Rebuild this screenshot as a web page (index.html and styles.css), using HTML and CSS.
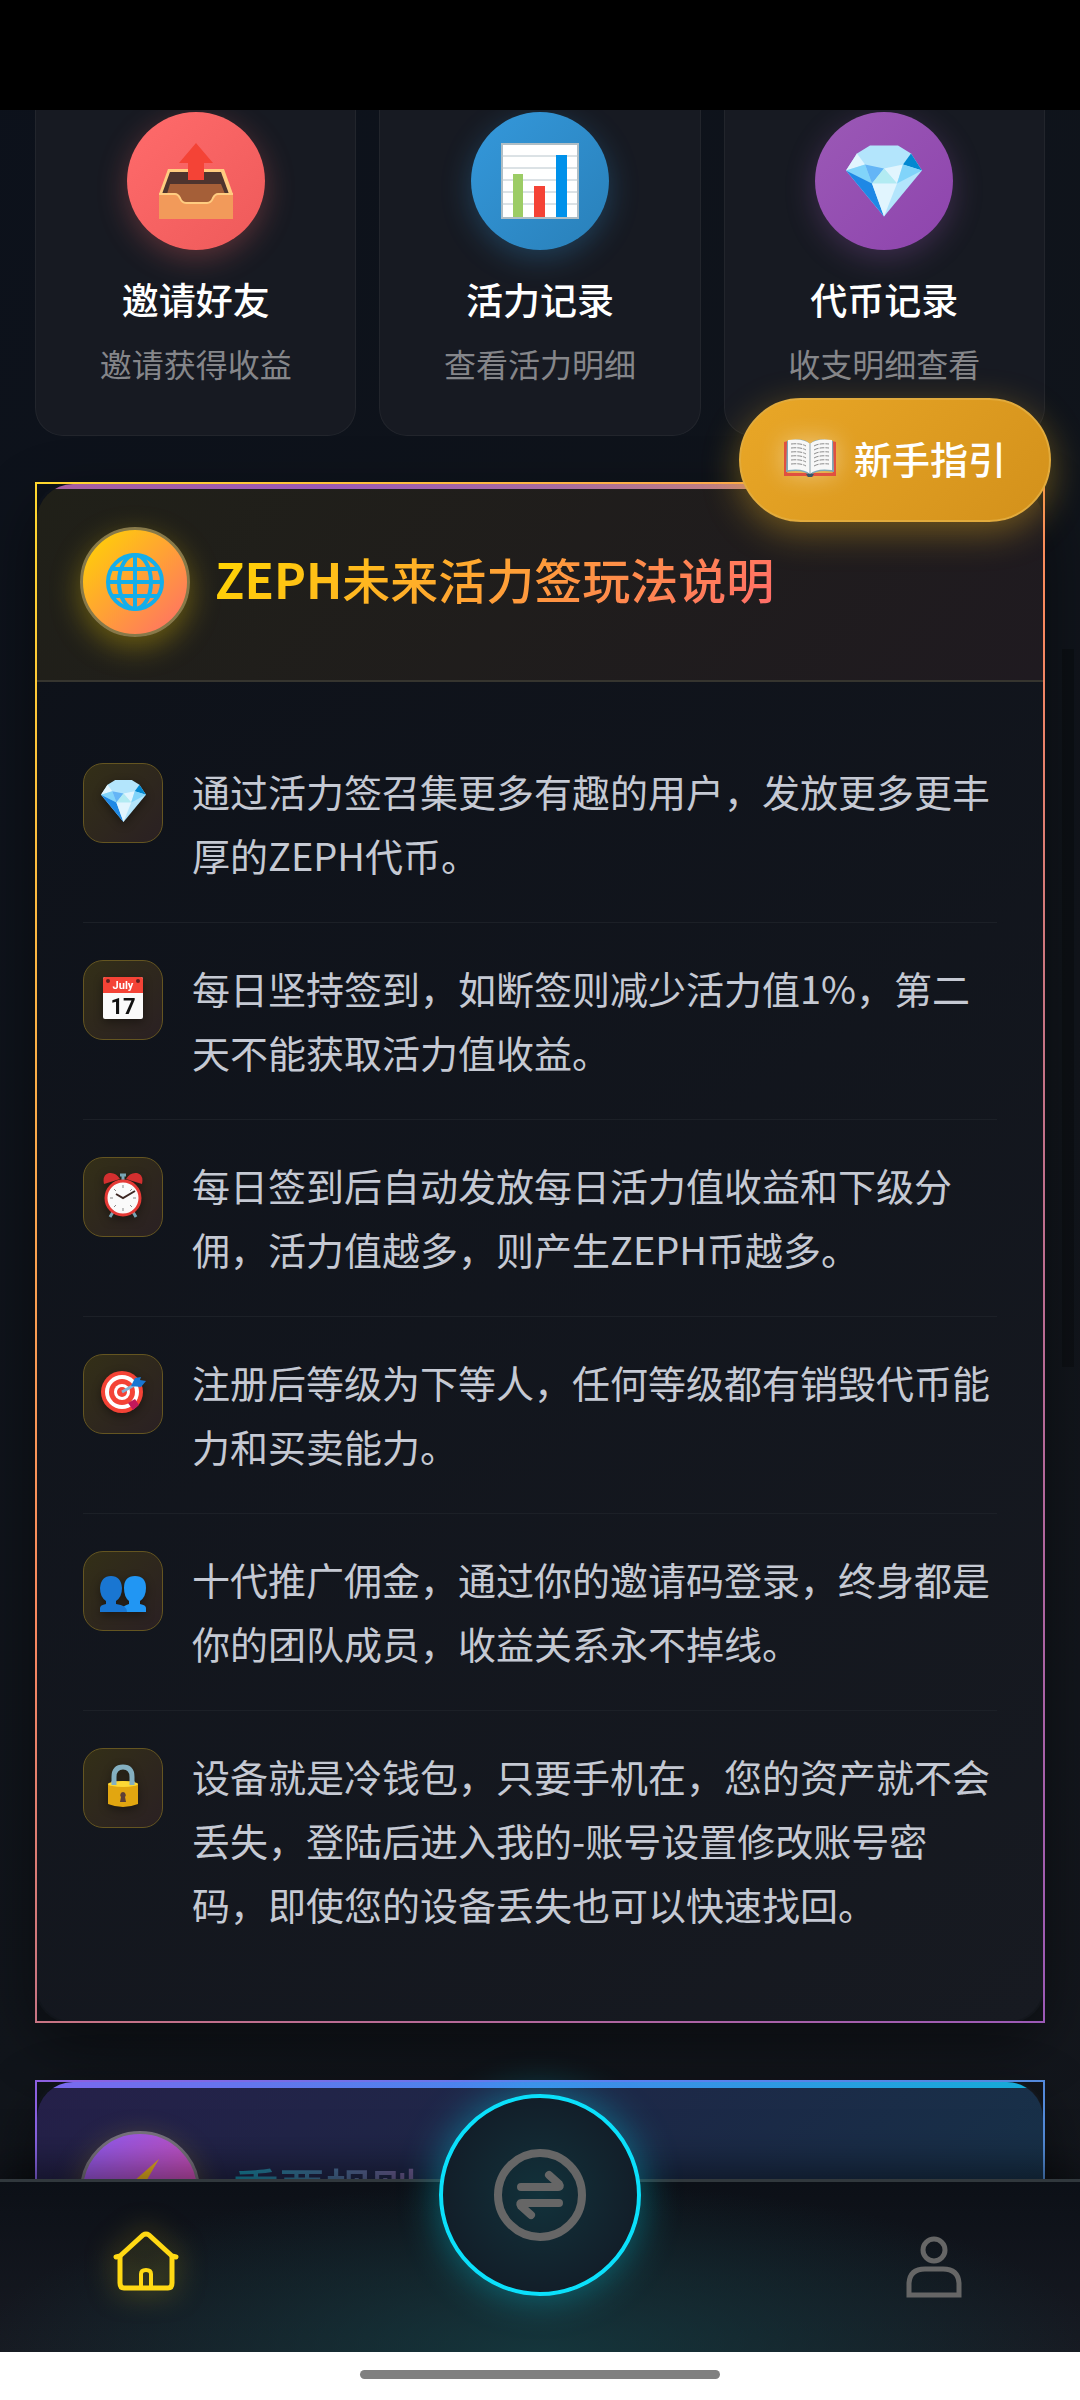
FILE: index.html
```html
<!DOCTYPE html>
<html lang="zh-CN">
<head>
    <meta charset="UTF-8">
    <meta name="viewport" content="width=device-width, initial-scale=1.0">
    <title>ZEPH</title>
    <link rel="stylesheet" href="styles.css">
</head>
<body>

<!-- shared drawings -->
<svg class="defs" aria-hidden="true">
    <symbol id="gem" viewBox="0 0 76 71">
        <path d="M24 0h28l13 8 11 17-38 46L0 25 11 8z" fill="#b3e5fc"/>
        <path d="M11 8l8 11L0 25z" fill="#e1f5fe"/>
        <path d="M65 8l11 17-19-6z" fill="#0288d1"/>
        <path d="M0 25l19-6 7 19z" fill="#81d4fa"/>
        <path d="M19 19l19 4-12 15z" fill="#64b5f6"/>
        <path d="M57 19l-19 4 13 15z" fill="#e1f5fe"/>
        <path d="M57 19l19 6-25 13z" fill="#81d4fa"/>
        <path d="M38 23l13 15H26z" fill="#b2ebf2"/>
        <path d="M0 25l26 13 12 33z" fill="#1e88e5"/>
        <path d="M26 38h25L38 71z" fill="#e1f5fe"/>
    </symbol>
</svg>

<div class="status-bar"></div>

<main class="page">
    <nav class="quick">
        <a class="quick-card" href="#invite">
            <span class="quick-icon red">
                <svg width="76" height="76" viewBox="0 0 76 76">
                    <path d="M10 26h56l9 25v25H1V51z" fill="#ffcc80"/>
                    <path d="M12 29h51l8 22H4z" fill="#4e342e"/>
                    <path d="M12 41h51l4 10-10 8H19L9 51z" fill="#a55f38"/>
                    <path d="M1 51h16q3 0 5 4 2 5 6 5h21q4 0 6-5 2-4 5-4h15v25H1z" fill="#f29a5a"/>
                    <path d="M1 51h16q3 0 5 4 2 5 6 5h21q4 0 6-5 2-4 5-4h15" fill="none" stroke="#ffcc80" stroke-width="2"/>
                    <path d="M38 0l17 20h-9v17H30V20h-9z" fill="#f44336"/>
                </svg>
            </span>
            <span class="quick-title">邀请好友</span>
            <span class="quick-desc">邀请获得收益</span>
        </a>
        <a class="quick-card" href="#vitality">
            <span class="quick-icon blue">
                <svg width="78" height="76" viewBox="0 0 78 76">
                    <path d="M1 1h76v74H1z" fill="#fff" stroke="#b0bec5" stroke-width="2"/>
                    <path d="M1 13h76M1 25h76M1 37h76M1 49h76M1 61h76" stroke="#b8c5cc"/>
                    <path d="M12 31h10v43H12z" fill="#9ccc65"/>
                    <path d="M33 43h11v31H33z" fill="#f44336"/>
                    <path d="M55 12h11v62H55z" fill="#0091ea"/>
                </svg>
            </span>
            <span class="quick-title">活力记录</span>
            <span class="quick-desc">查看活力明细</span>
        </a>
        <a class="quick-card" href="#token">
            <span class="quick-icon purple">
                <svg width="76" height="74"><use href="#gem"/></svg>
            </span>
            <span class="quick-title">代币记录</span>
            <span class="quick-desc">收支明细查看</span>
        </a>
    </nav>

    <section class="panel">
        <header class="panel-head">
            <span class="panel-icon">
                <svg width="58" height="58" viewBox="0 0 58 58" fill="none" stroke="#14aeea" stroke-width="4">
                    <circle cx="29" cy="29" r="27"/>
                    <ellipse cx="29" cy="29" rx="16" ry="27"/>
                    <path d="M29 2v54M2 29h54M7 16h44M7 43h44"/>
                </svg>
            </span>
            <h2><strong>ZEPH</strong>未来活力签玩法说明</h2>
        </header>
        <ul class="rules">
            <li>
                <span class="rule-icon"><svg width="45" height="42"><use href="#gem"/></svg></span>
                <p>通过活力签召集更多有趣的用户，发放更多更丰厚的ZEPH代币。</p>
            </li>
            <li>
                <span class="rule-icon">
                    <svg width="42" height="44" viewBox="0 0 42 44">
                        <rect x="1" y="1" width="40" height="42" rx="2" fill="#fafafa"/>
                        <path d="M1 17V3q0-2 2-2h36q2 0 2 2v14z" fill="#f44336"/>
                        <circle cx="6" cy="5" r="2" fill="#5d2020"/>
                        <circle cx="36" cy="5" r="2" fill="#5d2020"/>
                        <text x="21" y="13" class="cal-month">July</text>
                        <text x="21" y="38" class="cal-day">17</text>
                    </svg>
                </span>
                <p>每日坚持签到，如断签则减少活力值1%，第二天不能获取活力值收益。</p>
            </li>
            <li>
                <span class="rule-icon">
                    <svg width="40" height="46" viewBox="0 0 40 46">
                        <path d="M10 40l-3 5M30 40l3 5M20 2v8M17 3h6" stroke="#78a5b5" stroke-width="3"/>
                        <path d="M1 12Q-1 3 6 1q7-1 11 6zM39 12q2-9-5-11-7-1-11 6z" fill="#d32f2f"/>
                        <circle cx="20" cy="26" r="17" fill="#fafafa" stroke="#e53935" stroke-width="3"/>
                        <path d="M20 13v3M20 36v3M7 26h3M30 26h3M11 17l2 2M29 17l-2 2M11 35l2-2M29 35l-2-2" stroke="#888"/>
                        <path d="M13 22l7 4 12-7" fill="none" stroke="#3e2723" stroke-width="2"/>
                    </svg>
                </span>
                <p>每日签到后自动发放每日活力值收益和下级分佣，活力值越多，则产生ZEPH币越多。</p>
            </li>
            <li>
                <span class="rule-icon">
                    <svg width="46" height="44" viewBox="0 0 46 44">
                        <circle cx="22" cy="22" r="21" fill="#f44336"/>
                        <circle cx="22" cy="22" r="17" fill="#fff"/>
                        <circle cx="22" cy="22" r="13" fill="#f44336"/>
                        <circle cx="22" cy="22" r="8" fill="#fff"/>
                        <circle cx="22" cy="22" r="5" fill="#f44336"/>
                        <path d="M28 33l7-4 4 6-6 5z" fill="#c2185b"/>
                        <path d="M22 22l14-8" stroke="#81b4d8" stroke-width="3"/>
                        <path d="M31 16l4-8 6-1-1 3 6 1-5 6z" fill="#1976d2"/>
                    </svg>
                </span>
                <p>注册后等级为下等人，任何等级都有销毁代币能力和买卖能力。</p>
            </li>
            <li>
                <span class="rule-icon people">
                    <svg width="46" height="38" viewBox="0 0 46 38">
                        <path d="M23 37v-4q0-2 6-4v-3q-5-4-5-13Q24 1 35 1t11 12q0 9-6 13v3q6 1 6 4v4z" fill="#2196f3"/>
                        <path d="M0 37v-4q0-3 6-4v-3Q0 22 0 13 1 1 11 1t11 12q0 9-6 13v3q11 1 11 8z" fill="#1976d2"/>
                    </svg>
                </span>
                <p>十代推广佣金，通过你的邀请码登录，终身都是你的团队成员，收益关系永不掉线。</p>
            </li>
            <li>
                <span class="rule-icon">
                    <svg width="32" height="44" viewBox="0 0 32 44">
                        <path d="M7 22V13q0-10 9-10t9 10v9" fill="none" stroke="#84b0c1" stroke-width="5"/>
                        <path d="M1 20q15-6 30 0v20q-15 6-30 0z" fill="#e2a610"/>
                        <ellipse cx="16" cy="20" rx="15" ry="3" fill="#fdd835"/>
                        <path d="M7 17v4M25 17v4" stroke="#84b0c1" stroke-width="5"/>
                        <path d="M16 28a3 3 0 0 1 2 5l1 5h-6l1-5a3 3 0 0 1 2-5z" fill="#5d4037"/>
                    </svg>
                </span>
                <p>设备就是冷钱包，只要手机在，您的资产就不会丢失，登陆后进入我的-账号设置修改账号密码，即使您的设备丢失也可以快速找回。</p>
            </li>
        </ul>
    </section>

    <section class="panel important">
        <header class="panel-head">
            <span class="panel-icon">
                <svg width="64" height="64" viewBox="0 0 64 64">
                    <path d="M51 0L8 38h20L12 64l44-38H36z" fill="#e8b020"/>
                </svg>
            </span>
            <h2>重要规则</h2>
        </header>
    </section>
</main>

<div class="scroll-thumb"></div>

<button type="button" class="guide">
    <svg class="book" width="52" height="38" viewBox="0 0 52 38">
        <path d="M0 3l4-1v30l-1 2h46l-1-2V2l4 1v34H30q-4 2-8 0H0z" fill="#e05040"/>
        <path d="M3 2Q20-2 26 5q6-7 23-3l1 31q-18-3-24 4-6-7-24-4z" fill="#7fa9b8"/>
        <path d="M4 1q16-2 22 4 6-6 22-4v30q-16-2-22 4-6-6-22-4z" fill="#f7f7f7"/>
        <path d="M26 5v31" stroke="#c5ced2" stroke-width="2"/>
        <path d="M7 5q10-1 15 2M7 9q10-1 15 2M7 13q10-1 15 2M7 17q10-1 15 2M7 21q10-1 15 2M7 25q10-1 15 2M30 7q5-3 15-2M30 11q5-3 15-2M30 15q5-3 15-2M30 19q5-3 15-2M30 23q5-3 15-2M30 27q5-3 15-2" fill="none" stroke="#8d8d8d" stroke-dasharray="5 1"/>
        <path d="M22 35q4-1 4 0 0-1 4 0l-2 3h-4z" fill="#37596a"/>
    </svg>
    新手指引
</button>

<nav class="tabbar">
    <a class="tab active" href="#home" aria-label="首页">
        <svg width="66" height="60" viewBox="0 0 66 60" fill="none" stroke="#ffd914" stroke-width="5" stroke-linecap="round" stroke-linejoin="round">
            <path d="M3 26l4-1L30 4q3-2 6 0l23 21 4 1"/>
            <path d="M7 26v26q0 5 4 5h44q4 0 4-5V26"/>
            <path d="M28 57V43q0-4 5-4t5 4v14" stroke-width="4"/>
        </svg>
    </a>
    <a class="tab-center" href="#trade" aria-label="交易">
        <svg width="92" height="92" viewBox="0 0 92 92" fill="none" stroke="#666" stroke-width="8" stroke-linecap="round" stroke-linejoin="round">
            <circle cx="46" cy="46" r="42"/>
            <path d="M27 38h37q3 0 1-3l-10-9"/>
            <path d="M65 54H28q-3 0-1 3l10 9"/>
        </svg>
    </a>
    <a class="tab" href="#me" aria-label="我的">
        <svg width="56" height="64" viewBox="0 0 56 64" fill="none" stroke="#666" stroke-width="5">
            <circle cx="28" cy="15" r="11"/>
            <path d="M3 60V48q1-14 16-14h18q15 0 16 14v12z"/>
        </svg>
    </a>
</nav>

<div class="gesture-bar"><span></span></div>

</body>
</html>
```
FILE: styles.css
```css
* { box-sizing: border-box; }
body {
    margin: 0; height: 100vh; display: flex; flex-direction: column; position: relative;
    font-family: "Noto Sans CJK SC", sans-serif; color: #fff;
    background: linear-gradient(135deg, #0c111b, #11151b 60%, #14171d);
}
a { color: inherit; text-decoration: none; }
svg { display: block; }
.defs { position: absolute; width: 0; height: 0; }

.status-bar { flex: none; height: 110px; background: #000; }
.page { flex: 1; min-height: 0; overflow-y: auto; scrollbar-width: none; padding: 0 35px; }

/* quick entries */
.quick { display: grid; grid-template-columns: repeat(3, 1fr); gap: 23px; }
.quick-card {
    display: flex; flex-direction: column; align-items: center; padding: 2px 0 52px;
    background: #171a22; border: 1px solid #22252c; border-top: none; border-radius: 0 0 28px 28px;
}
.quick-icon {
    width: 138px; height: 138px; border-radius: 50%; margin-bottom: 24px;
    display: flex; align-items: center; justify-content: center;
}
.red { background: linear-gradient(135deg, #ff6b6b, #ee5a5a); box-shadow: 0 8px 30px rgba(255, 107, 107, .3); }
.blue { background: linear-gradient(135deg, #3498db, #2980b9); box-shadow: 0 8px 30px rgba(52, 152, 219, .3); }
.purple { background: linear-gradient(135deg, #9b59b6, #8e44ad); box-shadow: 0 8px 30px rgba(155, 89, 182, .3); }
.quick-title { font-size: 37px; line-height: 50px; font-weight: 500; margin-bottom: 19px; }
.quick-desc { font-size: 32px; line-height: 40px; color: #85868a; }

/* rule panels */
.panel {
    margin: 46px 0 57px; border: 2px solid;
    border-image: linear-gradient(135deg, #ffd72e, #f9885f 45%, #c87482 60%, #9b59b6) 1;
    border-radius: 36px; background: linear-gradient(145deg, #0d1119, #171a21) padding-box;
    box-shadow: 0 20px 60px rgba(0, 0, 0, .45);
}
.panel-head {
    display: flex; align-items: center; gap: 25px; padding: 38px 43px 43px;
    border-top: 5px solid transparent; border-bottom: 2px solid #36352f; border-radius: 36px 36px 0 0;
    background: linear-gradient(90deg, #a8609f, #9b59b6 28%, #a86ca0 52%, #d28d6c 80%, #ff9060) border-box top / 100% 5px no-repeat,
        linear-gradient(135deg, #202018, #1f1a20) border-box;
}
.panel-icon {
    flex: none; width: 110px; height: 110px; border-radius: 50%; border: 3px solid #877949;
    display: flex; align-items: center; justify-content: center;
    background: linear-gradient(135deg, #ffd700, #ff6b6b); box-shadow: 0 10px 30px rgba(255, 215, 0, .35);
}
.panel h2 {
    margin: 0; padding-bottom: 8px; font-size: 48px; line-height: 64px; font-weight: 500;
    background: linear-gradient(135deg, #ffd700, #ff6b6b); -webkit-background-clip: text; background-clip: text;
    color: transparent;
}
.rules { list-style: none; margin: 0; padding: 44px 46px 50px; }
.rules li { display: flex; align-items: flex-start; gap: 29px; padding: 33px 0 35px; border-bottom: 1px solid #1c2027; }
.rules li:last-child { border-bottom: none; }
.rules p { flex: 1; margin: 0; font-size: 38px; line-height: 64px; color: #c5c9d3; }
.rule-icon {
    flex: none; width: 80px; height: 80px; margin-top: 4px; border-radius: 20px; border: 1px solid #645521;
    display: flex; align-items: center; justify-content: center; padding-bottom: 4px;
    background: linear-gradient(135deg, #332f17, #2a2023);
}
.rule-icon svg { filter: drop-shadow(0 3px 5px rgba(0, 0, 0, .4)); }
.people { padding: 6px 0 0; }
.cal-month { font: bold 11px Roboto, sans-serif; fill: #fff; text-anchor: middle; }
.cal-day { font: bold 22px Roboto, sans-serif; fill: #111; text-anchor: middle; }

.important { border-image: linear-gradient(135deg, #8d5fe0, #5b7ff0 50%, #4f8fd0) 1; }
.important .panel-head {
    gap: 33px; padding-top: 43px; border-top-width: 6px;
    background: linear-gradient(90deg, #7b68ee, #4a85ec 45%, #14acd8) border-box top / 100% 6px no-repeat,
        linear-gradient(135deg, #252049, #1d2847 50%, #163349) border-box;
}
.important .panel-icon {
    width: 120px; height: 120px; border-color: #77727c;
    background: linear-gradient(135deg, #8b5cf6, #ec4899); box-shadow: 0 8px 30px rgba(255, 215, 0, .25);
}
.important h2 { font-size: 46px; background-image: linear-gradient(90deg, #168aa5, #755a92); }

.scroll-thumb { position: absolute; right: 6px; top: 649px; width: 12px; height: 718px; background: rgba(0, 0, 0, .22); }

/* floating guide button */
.guide {
    position: absolute; top: 398px; right: 29px; height: 124px; padding: 0 43px 5px; border-radius: 62px;
    display: flex; align-items: center; gap: 18px;
    border: 2px solid #e2ab3c; background: linear-gradient(135deg, #e9a727, #d3911b);
    color: #fff; font: 500 38px "Noto Sans CJK SC", sans-serif; cursor: pointer;
    box-shadow: 0 10px 36px rgba(240, 180, 30, .4);
}
.book { filter: drop-shadow(0 0 12px rgba(255, 255, 255, .4)); }

/* bottom bar */
.tabbar {
    flex: none; height: 173px; display: flex; justify-content: space-between; align-items: center; position: relative;
    border-top: 3px solid #31383d;
    background: radial-gradient(ellipse 52% 100% at 50% 100%, rgba(20, 60, 66, .8), transparent),
        linear-gradient(#0c1017, #171a22);
    box-shadow: 0 -10px 40px rgba(0, 0, 0, .5);
}
.tab { width: 27%; display: flex; justify-content: center; }
.active { padding-bottom: 12px; }
.active svg { filter: drop-shadow(0 0 14px rgba(255, 217, 20, .5)); }
.tab-center {
    width: 202px; height: 202px; margin-top: -145px; border-radius: 50%; border: 4px solid #0be0fb;
    display: flex; align-items: center; justify-content: center;
    background: radial-gradient(circle, #12323b, #121d28 75%);
    box-shadow: 0 0 40px rgba(0, 212, 235, .45);
}
.gesture-bar {
    flex: none; height: 48px; padding-bottom: 3px; position: relative; background: #fff;
    display: flex; align-items: center; justify-content: center;
}
.gesture-bar span { width: 360px; height: 9px; border-radius: 5px; background: #808080; }
```
